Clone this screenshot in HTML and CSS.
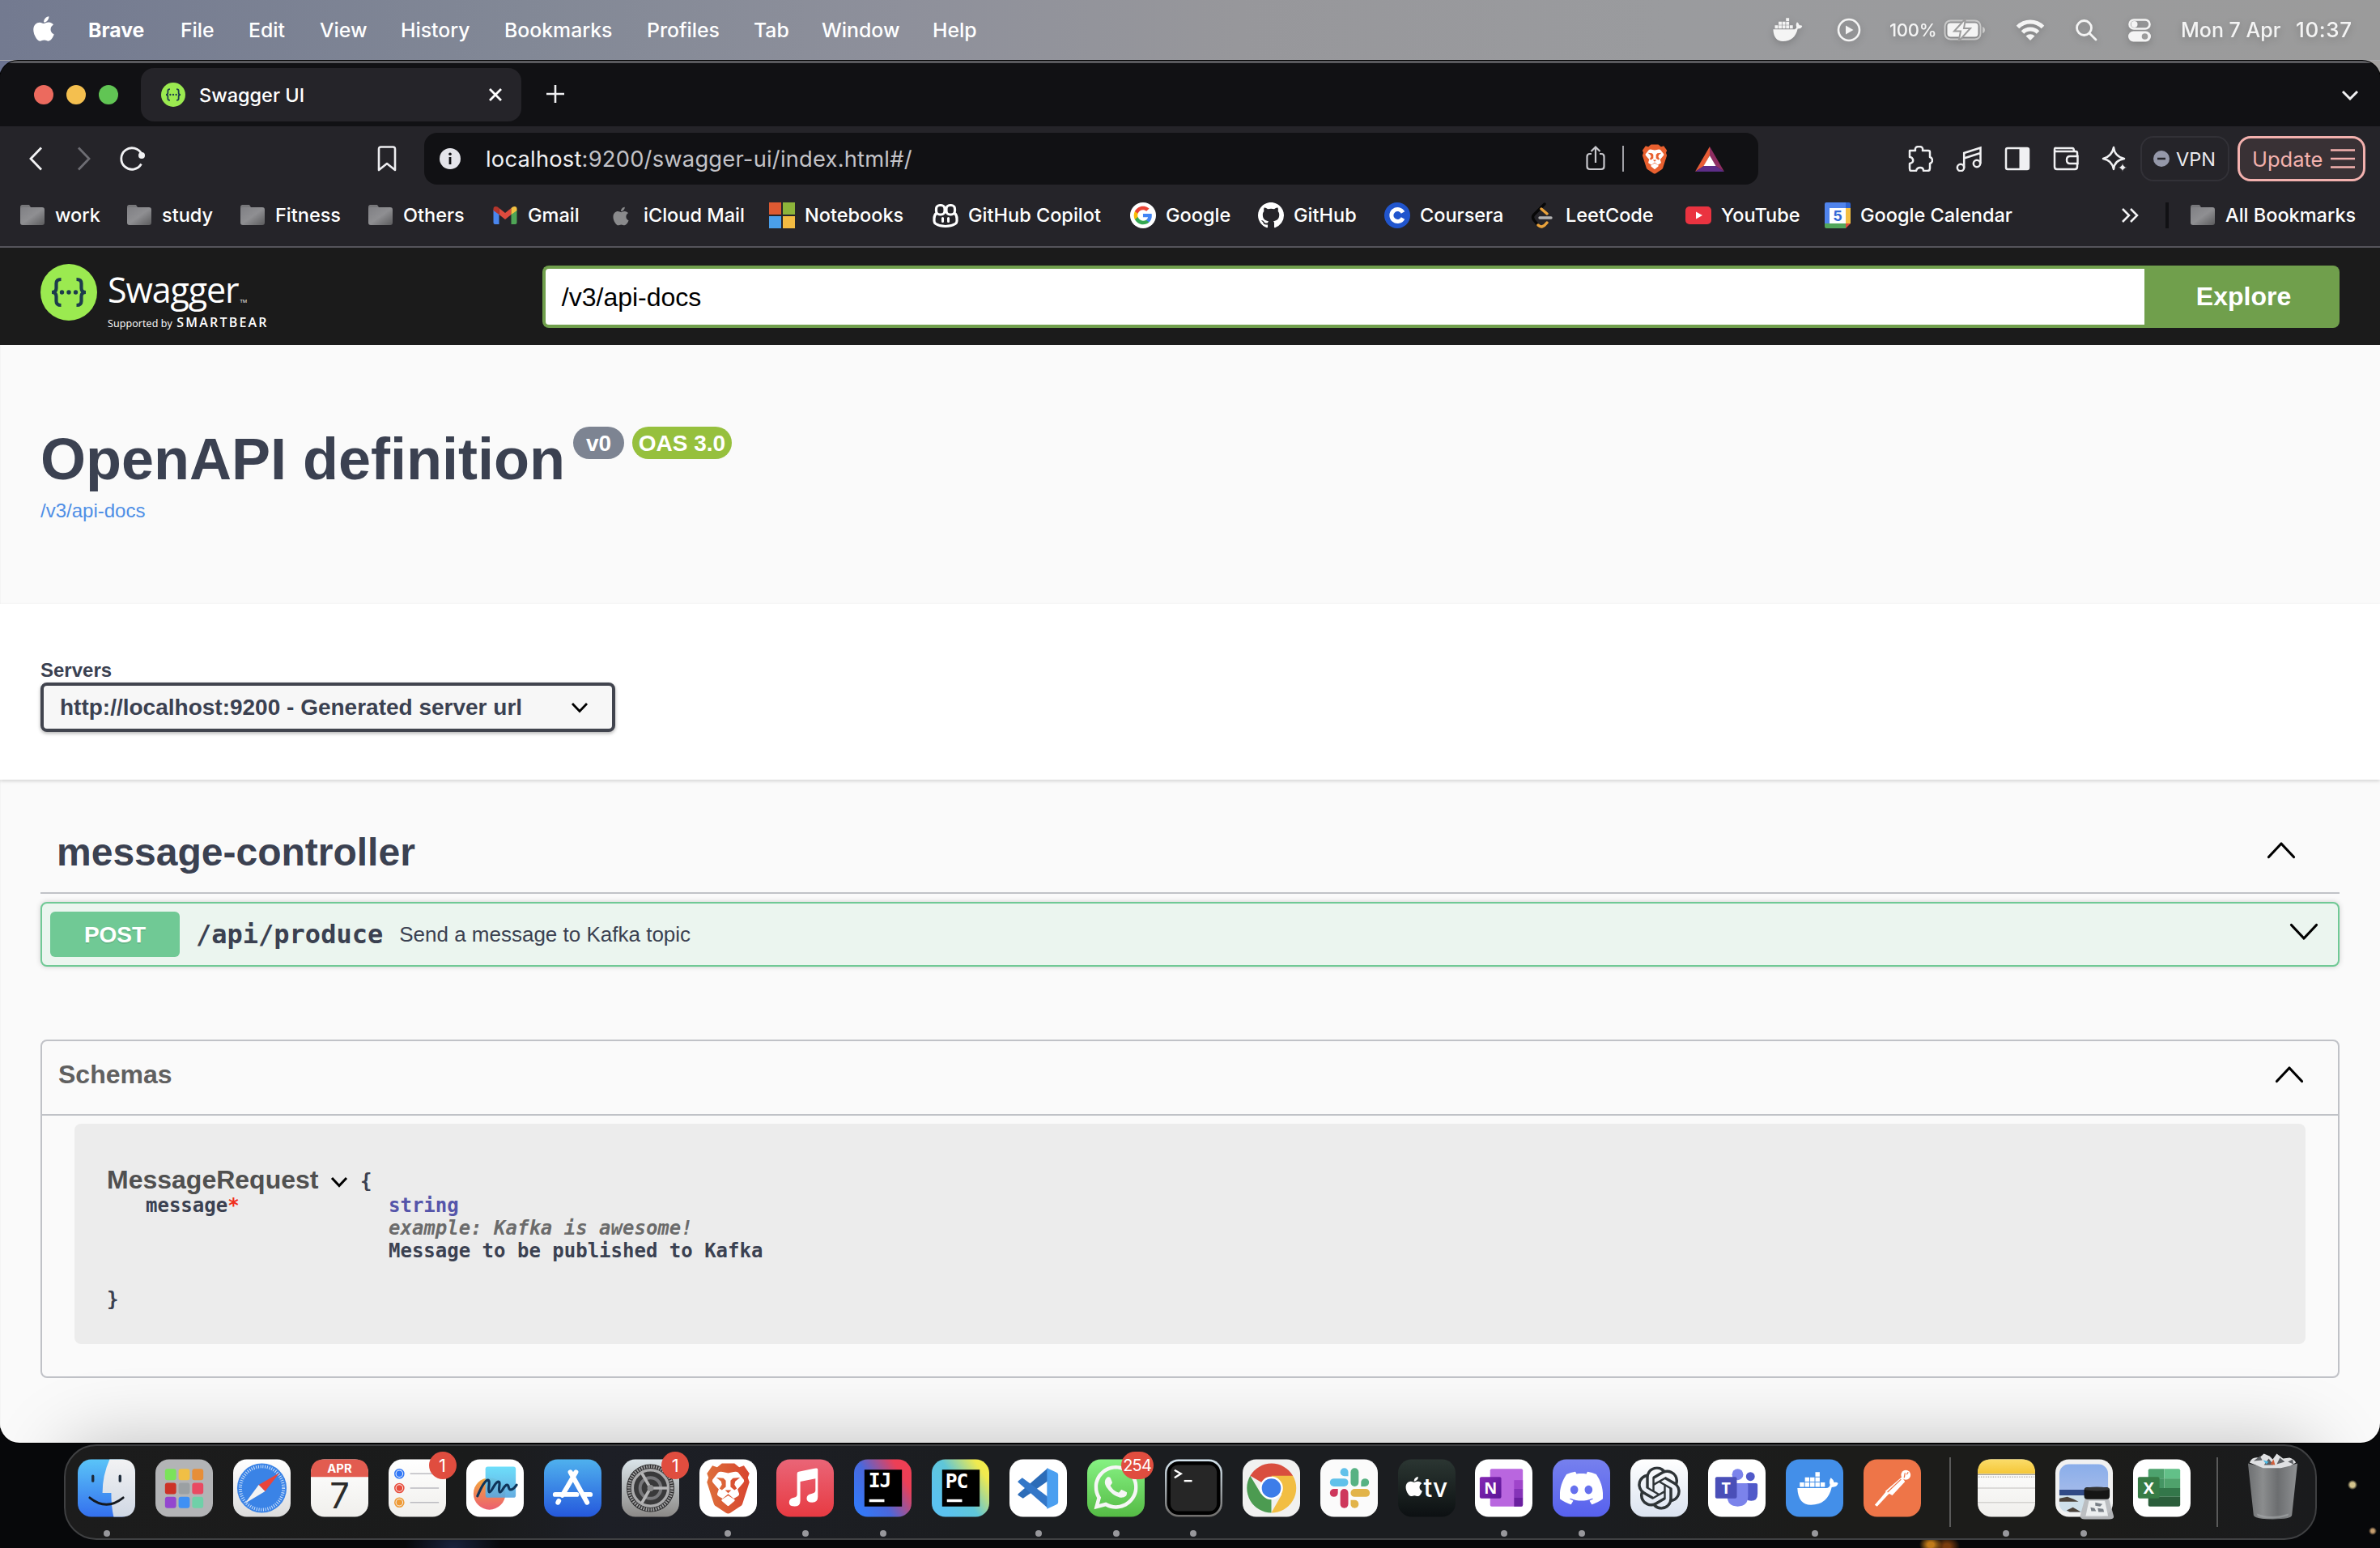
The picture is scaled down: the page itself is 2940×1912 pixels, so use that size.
FILE: index.html
```html
<!DOCTYPE html>
<html lang="en">
<head>
<meta charset="utf-8">
<title>Swagger UI</title>
<link rel="stylesheet" href="styles.css">
</head>
<body>
<svg class="defs" width="0" height="0">
  <defs>
    <linearGradient id="gFolder" x1="0" y1="0" x2="1" y2="1"><stop offset="0" stop-color="#808084"/><stop offset=".5" stop-color="#8f8f92"/><stop offset="1" stop-color="#5b5b5d"/></linearGradient>
    <linearGradient id="gFinder" x1="0" y1="0" x2="0" y2="1"><stop offset="0" stop-color="#5ac4f8"/><stop offset="1" stop-color="#3470ee"/></linearGradient>
    <linearGradient id="gFinderR" x1="0" y1="0" x2="0" y2="1"><stop offset="0" stop-color="#f2f2f3"/><stop offset="1" stop-color="#d0d8e4"/></linearGradient>
    <linearGradient id="gWhite" x1="0" y1="0" x2="0" y2="1"><stop offset="0" stop-color="#ffffff"/><stop offset="1" stop-color="#dcdcdc"/></linearGradient>
    <linearGradient id="gPaper" x1="0" y1="0" x2="0" y2="1"><stop offset="0" stop-color="#ffffff"/><stop offset="1" stop-color="#f0efec"/></linearGradient>
    <linearGradient id="gBlue" x1="0" y1="0" x2="0" y2="1"><stop offset="0" stop-color="#4fb1ee"/><stop offset="1" stop-color="#2558dc"/></linearGradient>
    <linearGradient id="gSet" x1="0" y1="0" x2="0" y2="1"><stop offset="0" stop-color="#dbe5ea"/><stop offset="1" stop-color="#8b8987"/></linearGradient>
    <linearGradient id="gBrave" x1="0" y1="0" x2="1" y2="0"><stop offset="0" stop-color="#dd6f3a"/><stop offset="1" stop-color="#d8452f"/></linearGradient>
    <linearGradient id="gMusic" x1="0" y1="0" x2="0" y2="1"><stop offset="0" stop-color="#ea6577"/><stop offset="1" stop-color="#e73a42"/></linearGradient>
    <linearGradient id="gIJ" x1="0" y1=".7" x2="1" y2=".1"><stop offset="0" stop-color="#3478f6"/><stop offset=".35" stop-color="#4a68dc"/><stop offset=".8" stop-color="#ec3f56"/><stop offset="1" stop-color="#ee3f54"/></linearGradient>
    <linearGradient id="gPC" x1=".1" y1=".7" x2="1" y2=".1"><stop offset="0" stop-color="#5bc2ef"/><stop offset=".4" stop-color="#5fc6d8"/><stop offset=".85" stop-color="#f0ea4f"/><stop offset="1" stop-color="#f4ed4a"/></linearGradient>
    <linearGradient id="gWa" x1="0" y1="0" x2="0" y2="1"><stop offset="0" stop-color="#86f283"/><stop offset="1" stop-color="#55bb45"/></linearGradient>
    <linearGradient id="gTerm" x1="0" y1="0" x2="0" y2="1"><stop offset="0" stop-color="#d4e4ee"/><stop offset="1" stop-color="#6f6d6b"/></linearGradient>
    <linearGradient id="gTv" x1="0" y1="0" x2="0" y2="1"><stop offset="0" stop-color="#2b3632"/><stop offset="1" stop-color="#0c1012"/></linearGradient>
    <linearGradient id="gDisc" x1="0" y1="0" x2="0" y2="1"><stop offset="0" stop-color="#7680ee"/><stop offset="1" stop-color="#5761ee"/></linearGradient>
    <linearGradient id="gAi" x1="0" y1="0" x2="0" y2="1"><stop offset="0" stop-color="#ffffff"/><stop offset="1" stop-color="#dbe3f0"/></linearGradient>
    <linearGradient id="gNote" x1="0" y1="0" x2="0" y2="1"><stop offset="0" stop-color="#fbdc6a"/><stop offset="1" stop-color="#f5c737"/></linearGradient>
    <linearGradient id="gSky" x1="0" y1="0" x2="0" y2="1"><stop offset="0" stop-color="#8aaeea"/><stop offset="1" stop-color="#b4c2ea"/></linearGradient>
    <linearGradient id="gBin" x1="0" y1="0" x2="1" y2="0"><stop offset="0" stop-color="#6e7072"/><stop offset=".3" stop-color="#8b8d8e"/><stop offset=".6" stop-color="#6c6e70"/><stop offset="1" stop-color="#8f9193"/></linearGradient>
    <linearGradient id="gPurp" x1="0" y1="0" x2="1" y2="1"><stop offset="0" stop-color="#8528b4"/><stop offset="1" stop-color="#5a1596"/></linearGradient>
    <linearGradient id="gFree" x1="0" y1="0" x2="0" y2="1"><stop offset="0" stop-color="#f3a93c"/><stop offset="1" stop-color="#ec5f70"/></linearGradient>
    <linearGradient id="gFree2" x1="0" y1="0" x2="0" y2="1"><stop offset="0" stop-color="#62dcfa"/><stop offset="1" stop-color="#5aa6de"/></linearGradient>
    <symbol id="apple" viewBox="0 0 384 512"><path fill="currentColor" d="M318.7 268.7c-.2-36.7 16.4-64.4 50-84.8-18.8-26.9-47.2-41.7-84.7-44.6-35.5-2.8-74.3 20.7-88.5 20.7-15 0-49.4-19.7-76.4-19.7C63.3 141.2 4 184.8 4 273.5q0 39.3 14.4 81.2c12.8 36.7 59 126.7 107.2 125.2 25.2-.6 43-17.9 75.8-17.9 31.8 0 48.3 17.9 76.4 17.9 48.6-.7 90.4-82.5 102.6-119.3-65.2-30.7-61.7-90-61.7-91.9zm-56.6-164.2c27.3-32.4 24.8-61.9 24-72.5-24.1 1.4-52 16.4-67.9 34.9-17.5 19.8-27.8 44.3-25.6 71.9 26.1 2 49.9-11.4 69.5-34.3z"/></symbol>
    <symbol id="folder" viewBox="0 0 32 32"><path fill="#77777a" d="M1 6q0-3 2.500-3h8.500l2 3v4H1z"/><rect x="1" y="6" width="30" height="22" rx="3" fill="url(#gFolder)"/></symbol>
    <symbol id="braces" viewBox="0 0 70 70"><circle cx="35" cy="35" r="35" fill="#9bea50"/><g fill="none" stroke="#1d3c4c" stroke-width="4.200"><path d="M25.500 19q-6 0-6 5v6q0 5-5.500 5 5.500 0 5.500 5v6q0 5 6 5"/><path d="M44.500 19q6 0 6 5v6q0 5 5.500 5-5.500 0-5.500 5v6q0 5-6 5"/></g><g fill="#1d3c4c"><circle cx="26.500" cy="35" r="2.700"/><circle cx="35" cy="35" r="2.700"/><circle cx="43.500" cy="35" r="2.700"/></g></symbol>
    <symbol id="lion" viewBox="8 4 56 66"><path d="M28 5h16l6 5 6-2 7 10-2 5 2 6-9 28q-1 2-3 3l-12 8q-3 2-6 0l-12-8q-2-1-3-3L9 29l2-6-2-5 7-10 6 2z"/><path fill="#fff" d="M29 16l7 1.500 7-1.500q4-1 6 1l7 9q1 2-1 4l-7 8 2 6q0 2-2 3l-5 3-7-6-7 6-5-3q-2-1-2-3l2-6-7-8q-2-2-1-4l7-9q2-2 6-1z"/><path d="M21 23l9 1 3 3v8l-5 4-3-2 3-5-1-4zM51 23l-9 1-3 3v8l5 4 3-2-3-5 1-4zM32 39h8l-4 4z"/><path fill="#fff" d="M36 46l8 5q1 1 0 2l-7 6q-1 1-2 0l-7-6q-1-1 0-2z"/></symbol>
    <symbol id="up" viewBox="0 0 36 22"><path d="M2.500 19.500 18 3l15.500 16.500" fill="none" stroke="#000" stroke-width="3.200" stroke-linecap="round" stroke-linejoin="round"/></symbol>
    <symbol id="whale" viewBox="0 0 54 48"><path fill="currentColor" d="M2 23h36q4 0 5-4-2-5 1-9 3 2 4 6 3-1 5 1-1 5-8 5-5 22-26 22Q3 44 2 23zM5 16h5.500v5.500H5zm6.500 0H17v5.500h-5.500zm6.500 0h5.500v5.500H18zm6.500 0H30v5.500h-5.500zm6.500 0h5.500v5.500H31zM11.500 9.500H17V15h-5.500zm6.500 0h5.500V15H18zm6.500 0H30V15h-5.500zm0-6.500H30v5.500h-5.500z"/></symbol>
    <symbol id="note" viewBox="0 0 40 48"><path fill="currentColor" d="M12 7q0-2 2-2.500L36 0q2 0 2 2v34q0 7-7 7t-7-5 6-6q5-1 5-4V13l-19 4v24q0 7-7 7t-7-5 6-6q4-1 4-4z"/></symbol>
  </defs>
</svg>

<nav class="menubar">
  <svg class="m-apple"><use href="#apple"/></svg>
  <div class="m-items"><b>Brave</b><span>File</span><span>Edit</span><span>View</span><span>History</span><span>Bookmarks</span><span>Profiles</span><span>Tab</span><span>Window</span><span>Help</span></div>
  <div class="m-status">
    <svg width="38" height="34" viewBox="0 0 54 48"><use href="#whale"/></svg>
    <svg width="30" height="30" viewBox="0 0 30 30"><circle cx="15" cy="15" r="13" fill="none" stroke="#f4f4f4" stroke-width="2.600"/><path d="M11 9.500 20.500 15 11 20.500z" fill="#f4f4f4"/></svg>
    <span class="m-pct">100%</span>
    <svg width="52" height="28" viewBox="0 0 52 28"><rect x="1.500" y="2.500" width="44" height="23" rx="7" fill="none" stroke="#c9c9c9" stroke-width="2"/><rect x="4.500" y="5.500" width="38" height="17" rx="4" fill="#f4f4f4"/><path d="M48 10q3 1 3 4t-3 4z" fill="#c9c9c9"/><path d="M27 0 13 15.500h8L18.500 28 33 12h-8z" fill="#f4f4f4" stroke="#9c9c9c" stroke-width="2"/></svg>
    <svg width="36" height="28" viewBox="0 0 36 28"><g fill="none" stroke="#f4f4f4" stroke-width="5"><path d="M2.500 10.500a22 22 0 0 1 31 0"/><path d="M8.500 17a13.500 13.500 0 0 1 19 0"/></g><path d="M18 27l-5.500-5.500a8 8 0 0 1 11 0z" fill="#f4f4f4"/></svg>
    <svg width="28" height="28" viewBox="0 0 28 28"><g fill="none" stroke="#f4f4f4" stroke-width="2.800" stroke-linecap="round"><circle cx="11.500" cy="11.500" r="9"/><path d="M18 18l8 8"/></g></svg>
    <svg width="28" height="30" viewBox="0 0 28 30"><rect x="1.500" y="2.500" width="25" height="11" rx="5.500" fill="none" stroke="#f4f4f4" stroke-width="2.600"/><circle cx="7.500" cy="8" r="4" fill="#f4f4f4"/><rect x="0" y="16.500" width="28" height="13" rx="6.500" fill="#f4f4f4"/><circle cx="20.500" cy="23" r="3.800" fill="#9c9c9c"/></svg>
    <span class="m-date">Mon 7 Apr</span><span class="m-time">10:37</span>
  </div>
</nav>

<main class="window">
  <header class="tabs">
    <i class="light red"></i><i class="light yellow"></i><i class="light green"></i>
    <div class="tab"><svg class="fav"><use href="#braces"/></svg><span>Swagger UI</span><svg class="close" viewBox="0 0 18 18"><path d="M2 2l14 14M16 2 2 16" stroke="#fff" stroke-width="2.800"/></svg></div>
    <svg class="plus" viewBox="0 0 22 22"><path d="M11 0v22M0 11h22" stroke="#f0f0f2" stroke-width="2.600"/></svg>
    <svg class="tabmenu" viewBox="0 0 22 13"><path d="M2 2l9 9 9-9" fill="none" stroke="#f0f0f2" stroke-width="3"/></svg>
  </header>

  <div class="toolbar">
    <svg class="back" viewBox="0 0 16 30"><path d="M15 1.500 2 15l13 13.500" fill="none" stroke="#f2f2f4" stroke-width="2.800"/></svg>
    <svg class="fwd" viewBox="0 0 16 30"><path d="M1 1.500 14 15 1 28.500" fill="none" stroke="#6d6d73" stroke-width="2.800"/></svg>
    <svg class="reload" viewBox="0 0 32 32"><path d="M26.500 22.500A13.200 13.200 0 1 1 27 10.500" fill="none" stroke="#f2f2f4" stroke-width="2.800"/><circle cx="27" cy="12" r="4" fill="#f2f2f4"/></svg>
    <svg class="bm" viewBox="0 0 24 32"><path d="M2 4q0-2.500 2.500-2.500h15Q22 1.500 22 4v26l-10-8-10 8z" fill="none" stroke="#ededf0" stroke-width="2.600" stroke-linejoin="round"/></svg>
    <div class="omnibox">
      <svg class="info" viewBox="0 0 26 26"><circle cx="13" cy="13" r="13" fill="#e4e4ea"/><path d="M13 11v9" stroke="#111114" stroke-width="2.800"/><circle cx="13" cy="7.300" r="1.800" fill="#111114"/></svg>
      <span class="url"><em>localhost</em>:9200/swagger-ui/index.html#/</span>
      <svg class="share" viewBox="0 0 26 32"><path d="M8 11H6q-3.500 0-3.500 3.500v12Q2.500 30 6 30h14q3.500 0 3.500-3.500v-12Q23.500 11 20 11h-2M13 22V3M7.500 8 13 2.500 18.500 8" fill="none" stroke="#c8c8cd" stroke-width="2.200"/></svg>
      <i class="osep"></i>
      <svg class="obrave" fill="#e9602f" viewBox="8 4 56 66"><use href="#lion" x="8" y="4" width="56" height="66"/></svg>
      <svg class="bat" viewBox="0 0 36 31"><path fill="#e85d36" d="M18 0 0 31l11-7 7-13z"/><path fill="#8e2e62" d="M18 0l18 31-11-7-7-13z"/><path fill="#5d2d88" d="M0 31h36l-10.500-7h-15z"/><path fill="#fff" d="M18 11l7.500 13h-15z"/></svg>
    </div>
    <div class="exts">
      <svg viewBox="0 0 32 32"><path d="M3 6h7q-1-5 4.500-5T19 6h7q2 0 2 2v6q3 1 3 4t-3 4v6q0 3-3 3h-5q0-4-4-4t-5 4H5q-2 0-2-3v-6q5-1 4-5-1-3-4-3z" fill="none" stroke="#f0f0f2" stroke-width="2.500" stroke-linejoin="round"/></svg>
      <svg viewBox="0 0 32 32"><g fill="none" stroke="#f0f0f2" stroke-width="2.500"><circle cx="6" cy="27" r="4.200"/><circle cx="26" cy="22" r="4.200"/><path d="M10.200 27V9L30.500 2.500V22M10.200 15.500 30.500 9"/></g></svg>
      <svg viewBox="0 0 32 32"><rect x="2" y="3" width="28" height="26" rx="2" fill="none" stroke="#f0f0f2" stroke-width="2.500"/><path d="M18.500 3H30v26H18.500z" fill="#f0f0f2"/></svg>
      <svg viewBox="0 0 32 32"><g fill="none" stroke="#f0f0f2" stroke-width="2.500"><path d="M30 13V9q0-2-2-2H4q-2 0-2-2.500T4 3h20q2 0 2 4M2 5v21q0 3 3 3h22q3 0 3-3v-4"/><path d="M30.500 13H21q-4 0-4 4.500t4 4.500h9.500z"/></g></svg>
      <svg viewBox="0 0 32 32"><path d="M15 2q1 11 13 14-12 2-13 13Q13 18 2 16 13 13 15 2z" fill="none" stroke="#f0f0f2" stroke-width="2.500" stroke-linejoin="round"/><path d="M26 21q.5 5 5.500 6-5 .8-5.500 5.500-.5-4.700-5.500-5.500 5-1 5.500-6z" fill="#f0f0f2" stroke="#252429" stroke-width=".6"/></svg>
    </div>
    <div class="vpn"><svg viewBox="0 0 20 20"><circle cx="10" cy="10" r="10" fill="#9598a9"/><path d="M5 10h10" stroke="#252429" stroke-width="2.600"/></svg><span>VPN</span></div>
    <div class="update"><span>Update</span><svg viewBox="0 0 30 26"><path d="M0 2.500h30M0 13h30M0 23.500h30" stroke="#f3b1ae" stroke-width="2.600"/></svg></div>
  </div>

  <div class="bookmarks">
    <a><svg><use href="#folder"/></svg>work</a>
    <a><svg><use href="#folder"/></svg>study</a>
    <a><svg><use href="#folder"/></svg>Fitness</a>
    <a><svg><use href="#folder"/></svg>Others</a>
    <a><svg viewBox="0 0 32 32"><path fill="#4a86ee" d="M1.500 9v16q0 2 2 2h5V14z"/><path fill="#4fa556" d="M30.500 9v16q0 2-2 2h-5V14z"/><path fill="#dd4b3e" d="M8.500 7 16 13l7.500-6v8L16 21l-7.500-6z"/><path fill="#b5352b" d="M1.500 8q0-3 3-3 2 0 4 2v8l-7-5z"/><path fill="#f4c142" d="M30.500 8q0-3-3-3-2 0-4 2v8l7-5z"/></svg>Gmail</a>
    <a class="grey"><svg><use href="#apple" y="4" height="26"/></svg><span>iCloud Mail</span></a>
    <a><svg viewBox="0 0 32 32"><path fill="#dd5a32" d="M0 0h15v15H0z"/><path fill="#8db43a" d="M17 0h15v15H17z"/><path fill="#4a9fea" d="M0 17h15v15H0z"/><path fill="#f3bb42" d="M17 17h15v15H17z"/></svg>Notebooks</a>
    <a><svg viewBox="0 0 32 32"><g fill="none" stroke="#fff" stroke-width="3.200"><rect x="4.500" y="3.500" width="10.500" height="11.500" rx="4.500"/><rect x="17" y="3.500" width="10.500" height="11.500" rx="4.500"/><path d="M4.500 13.500q-2.500 2.500-2.500 6.500v3q0 2 2 3.500 5 3 12 3t12-3q2-1.500 2-3.500v-3q0-4-2.500-6.500"/></g><path d="M12.500 19.500v4M19.500 19.500v4" stroke="#fff" stroke-width="3" stroke-linecap="round"/></svg>GitHub Copilot</a>
    <a><svg viewBox="0 0 32 32"><circle cx="16" cy="16" r="16" fill="#fff"/><g transform="translate(3.600 3.600) scale(1.030)"><path fill="#4285F4" d="M22.560 12.250c0-.78-.07-1.530-.2-2.250H12v4.260h5.920c-.26 1.370-1.040 2.530-2.210 3.310v2.770h3.570c2.080-1.920 3.280-4.740 3.280-8.090z"/><path fill="#34A853" d="M12 23c2.970 0 5.460-.98 7.280-2.660l-3.570-2.770c-.98.66-2.230 1.060-3.710 1.060-2.860 0-5.290-1.930-6.160-4.530H2.180v2.840C3.990 20.530 7.700 23 12 23z"/><path fill="#FBBC05" d="M5.840 14.090c-.22-.66-.35-1.360-.35-2.090s.13-1.430.35-2.090V7.070H2.180C1.430 8.550 1 10.220 1 12s.43 3.450 1.180 4.930l2.850-2.220.81-.62z"/><path fill="#EA4335" d="M12 5.380c1.620 0 3.060.56 4.210 1.640l3.150-3.150C17.450 2.090 14.970 1 12 1 7.700 1 3.990 3.470 2.180 7.070l3.660 2.840c.87-2.600 3.300-4.530 6.160-4.530z"/></g></svg>Google</a>
    <a><svg viewBox="0 0 16 16"><path fill="#fff" d="M8 0C3.580 0 0 3.580 0 8c0 3.540 2.290 6.530 5.470 7.590.4.070.55-.17.55-.38 0-.19-.01-.82-.01-1.490-2.010.37-2.530-.49-2.690-.94-.09-.23-.48-.94-.82-1.130-.28-.15-.68-.52-.01-.53.63-.01 1.080.58 1.230.82.72 1.210 1.870.87 2.330.66.07-.52.28-.87.51-1.070-1.780-.2-3.640-.89-3.640-3.950 0-.87.31-1.590.82-2.150-.08-.2-.36-1.020.08-2.120 0 0 .67-.21 2.200.82.64-.18 1.320-.27 2-.27.68 0 1.360.09 2 .27 1.530-1.040 2.200-.82 2.200-.82.44 1.100.16 1.920.08 2.120.51.56.82 1.270.82 2.150 0 3.070-1.870 3.750-3.650 3.950.29.25.54.73.54 1.480 0 1.070-.01 1.930-.01 2.200 0 .21.15.46.55.38A8.013 8.013 0 0016 8c0-4.420-3.580-8-8-8z"/></svg>GitHub</a>
    <a><svg viewBox="0 0 32 32"><circle cx="16" cy="16" r="16" fill="#2155cd"/><path d="M23 12.500A7.500 7.500 0 1 0 23 19.500" fill="none" stroke="#fff" stroke-width="5"/></svg>Coursera</a>
    <a><svg viewBox="0 0 32 32"><g fill="none" stroke-width="3.400" stroke-linecap="round"><path stroke="#070707" d="M18 2 5 15q-3 3 0 7l4 5"/><path stroke="#e9a23b" d="M14 8l7 6M10 28q5 5 11-3"/><path stroke="#b3b3b3" d="M12 19h14"/></g></svg>LeetCode</a>
    <a><svg viewBox="0 0 32 32"><rect y="5" width="32" height="22" rx="5" fill="#ea3340"/><path fill="#fff" d="M13 11.500 21 16l-8 4.500z"/></svg>YouTube</a>
    <a><svg viewBox="0 0 32 32"><path fill="#5084ed" d="M0 2q0-2 2-2h24v7H7v19H0z"/><path fill="#2f63cf" d="M26 0h4q2 0 2 2v5h-6z"/><path fill="#f3bf42" d="M26 7h6v19h-6z"/><path fill="#53a65a" d="M0 26h26v6H2q-2 0-2-2z"/><path fill="#dc4c3e" d="M26 26h6l-6 6z"/><path fill="#fff" d="M6 7h20v19H6z"/><text x="16" y="23" text-anchor="middle" class="cal5">5</text></svg>Google Calendar</a>
    <svg class="more" viewBox="0 0 22 18"><path d="M2 1l8 8-8 8M12 1l8 8-8 8" fill="none" stroke="#f4f4f6" stroke-width="2.500"/></svg>
    <i class="bsep"></i>
    <a><svg><use href="#folder"/></svg>All Bookmarks</a>
  </div>

  <section class="page">
    <div class="topbar">
      <svg class="logo"><use href="#braces"/></svg>
      <div class="brand"><div class="word">Swagger<sub>TM</sub></div><div class="by">Supported by <b>SMARTBEAR</b></div></div>
      <div class="field">/v3/api-docs</div>
      <div class="explore">Explore</div>
    </div>
    <div class="infobox">
      <div class="titlerow"><h1>OpenAPI definition</h1><span class="pill grey-pill">v0</span><span class="pill green-pill">OAS 3.0</span></div>
      <a class="doclink">/v3/api-docs</a>
    </div>
    <div class="schemes">
      <label>Servers</label>
      <div class="select"><span>http://localhost:9200 - Generated server url</span><svg viewBox="0 0 22 14"><path d="M2 2l9 9.500L20 2" fill="none" stroke="#000" stroke-width="2.800"/></svg></div>
    </div>
    <div class="body">
      <div class="tag"><h3>message-controller</h3><svg class="chev"><use href="#up"/></svg></div>
      <div class="op"><span class="method">POST</span><span class="path">/api/produce</span><span class="desc">Send a message to Kafka topic</span><svg class="chev down"><use href="#up"/></svg></div>
      <div class="models">
        <div class="mhead"><h4>Schemas</h4><svg class="chev"><use href="#up"/></svg></div>
        <div class="model">
          <div class="mname"><b>MessageRequest</b><svg viewBox="0 0 22 14"><path d="M2 2l9 9.500L20 2" fill="none" stroke="#000" stroke-width="3"/></svg><span>{</span></div>
          <div class="props"><div>message<i>*</i></div><div><p class="type">string</p><p class="ex">example: Kafka is awesome!</p><p>Message to be published to Kafka</p></div></div>
          <div class="end">}</div>
        </div>
      </div>
    </div>
  </section>
</main>

<footer class="dock">
  <div class="app on"><svg viewBox="0 0 72 72"><rect width="72" height="72" rx="17" fill="url(#gFinder)"/><path d="M40 0h15q17 0 17 17v38q0 17-17 17H45q-3-13-3-30H31Q31 20 40 0z" fill="url(#gFinderR)"/><path d="M19 21v6M53 21v6" stroke="#1d2b3a" stroke-width="3.400" stroke-linecap="round"/><path d="M15 48q21 17 42 0" fill="none" stroke="#14181e" stroke-width="2.800" stroke-linecap="round"/></svg></div>
  <div class="app"><svg viewBox="0 0 72 72"><rect width="72" height="72" rx="17" fill="#b3b4b6"/><g><rect x="12" y="12" width="14" height="14" rx="3" fill="#7be35a"/><rect x="29" y="12" width="14" height="14" rx="3" fill="#f0bf45"/><rect x="46" y="12" width="14" height="14" rx="3" fill="#e78e38"/><rect x="12" y="29.500" width="14" height="14" rx="3" fill="#cc3227"/><rect x="29" y="29.500" width="14" height="14" rx="3" fill="#9ba0a3"/><rect x="46" y="29.500" width="14" height="14" rx="3" fill="#e94a62"/><rect x="12" y="47" width="14" height="14" rx="3" fill="#9346cf"/><rect x="29" y="47" width="14" height="14" rx="3" fill="#3f90f4"/><rect x="46" y="47" width="14" height="14" rx="3" fill="#6fd0a8"/></g></svg></div>
  <div class="app"><svg viewBox="0 0 72 72"><rect width="72" height="72" rx="17" fill="url(#gWhite)"/><circle cx="36" cy="36" r="31" fill="#3a83e6"/><circle cx="36" cy="36" r="27" fill="none" stroke="#cfe3fb" stroke-width="4" stroke-dasharray="1 1.830"/><path d="M58 17 32 32l8 8z" fill="#e9453b"/><path d="M15 55 32 32l8 8z" fill="#f3f3f3"/></svg></div>
  <div class="app"><svg viewBox="0 0 72 72"><rect width="72" height="72" rx="17" fill="url(#gPaper)"/><path d="M0 22v-5Q0 0 17 0h38q17 0 17 17v5z" fill="#e25c50"/><text x="36" y="17" text-anchor="middle" class="apr">APR</text><text x="36" y="61" text-anchor="middle" class="seven">7</text></svg></div>
  <div class="app"><svg viewBox="0 0 72 72"><rect width="72" height="72" rx="17" fill="url(#gPaper)"/><g fill="none" stroke-width="1.600"><circle cx="13.500" cy="18" r="5.600" stroke="#3278f6"/><circle cx="13.500" cy="36" r="5.600" stroke="#e84d3d"/><circle cx="13.500" cy="54" r="5.600" stroke="#ee9a35"/></g><circle cx="13.500" cy="18" r="3.800" fill="#3278f6"/><circle cx="13.500" cy="36" r="3.800" fill="#e84d3d"/><circle cx="13.500" cy="54" r="3.800" fill="#ee9a35"/><path d="M27 18h36M27 36h36M27 54h36" stroke="#bcbcc1" stroke-width="1.600"/></svg><span class="badge">1</span></div>
  <div class="app"><svg viewBox="0 0 72 72"><rect width="72" height="72" rx="17" fill="#fff"/><circle cx="29" cy="43" r="20" fill="url(#gFree)"/><rect x="24" y="9" width="38" height="39" rx="3" fill="url(#gFree2)" opacity=".93"/><path d="M14 46C20 32 24 26 27 26c4 0-1 14 2 15 3 0 7-13 11-13 4 0-1 11 2 13 3 1 5-9 9-9 3 0 1 5 4 6 3 0 6-3 8-6" fill="none" stroke="#10355a" stroke-width="3.200" stroke-linecap="round" stroke-linejoin="round"/></svg></div>
  <div class="app"><svg viewBox="0 0 72 72"><rect width="72" height="72" rx="17" fill="url(#gBlue)"/><g stroke="#fff" stroke-width="6" stroke-linecap="round"><path d="M40 16 23 45M17.500 54l1-2M33 16l21 38M14 44h27M51 44h7"/></g></svg></div>
  <div class="app"><svg viewBox="0 0 72 72"><rect width="72" height="72" rx="17" fill="url(#gSet)"/><circle cx="36" cy="36" r="30" fill="#2c2c2d"/><circle cx="36" cy="36" r="27" fill="none" stroke="#a3a3a4" stroke-width="4" stroke-dasharray="1.700 1.400"/><circle cx="36" cy="36" r="22.500" fill="#39393a" stroke="#aaaaab" stroke-width="3.500"/><circle cx="36" cy="36" r="13" fill="none" stroke="#77777a" stroke-width="4"/><path d="M36 36h22M36 36 25 17M36 36 25 55" stroke="#b5b5b6" stroke-width="3.600"/><circle cx="36" cy="36" r="4" fill="#8b8b8c"/></svg><span class="badge">1</span></div>
  <div class="app on"><svg viewBox="0 0 72 72"><rect width="72" height="72" rx="17" fill="#fff"/><svg x="8" y="4" width="56" height="65" fill="url(#gBrave)"><use href="#lion"/></svg></svg></div>
  <div class="app on"><svg viewBox="0 0 72 72"><rect width="72" height="72" rx="17" fill="url(#gMusic)"/><svg x="14" y="11" width="40" height="48" color="#fff"><use href="#note"/></svg></svg></div>
  <div class="app on"><svg viewBox="0 0 72 72"><rect width="72" height="72" rx="17" fill="url(#gIJ)"/><path d="M13 13h47v46H13z"/><path d="M19 50h19v3.500H19z" fill="#fff"/><text x="18" y="35" class="jb">IJ</text></svg></div>
  <div class="app"><svg viewBox="0 0 72 72"><rect width="72" height="72" rx="17" fill="url(#gPC)"/><path d="M13 13h47v46H13z"/><path d="M19 50h19v3.500H19z" fill="#fff"/><text x="17" y="36" class="jb">PC</text></svg></div>
  <div class="app on"><svg viewBox="0 0 72 72"><rect width="72" height="72" rx="17" fill="#fff"/><path fill="#2c6cb8" d="M48 11v16L17 49l-6-4q-1-1 0-2z"/><path fill="#3377c8" d="M11 29q-1-1 0-2l5-4 32 24v14z"/><path fill="#4b9ff0" d="M47 11l11 5q3 1 3 3v35q0 2-3 3l-11 5z"/></svg></div>
  <div class="app on"><svg viewBox="0 0 72 72"><rect width="72" height="72" rx="17" fill="url(#gWa)"/><svg x="8.500" y="3" width="55" height="64" viewBox="0 0 448 512"><path fill="#f6f6f6" d="M380.900 97.100C339 55.100 283.200 32 223.900 32c-122.400 0-222 99.600-222 222 0 39.100 10.200 77.300 29.600 111L0 480l117.700-30.900c32.400 17.700 68.900 27 106.100 27h.1c122.300 0 224.100-99.600 224.100-222 0-59.300-25.200-115-67.100-157zm-157 341.600c-33.200 0-65.700-8.900-94-25.700l-6.700-4-69.800 18.300L72 359.200l-4.400-7c-18.500-29.400-28.200-63.300-28.200-98.200 0-101.700 82.800-184.500 184.600-184.500 49.300 0 95.600 19.200 130.400 54.100 34.800 34.900 56.200 81.200 56.100 130.500 0 101.800-84.900 184.600-186.600 184.600zm101.200-138.200c-5.500-2.800-32.800-16.200-37.900-18-5.100-1.900-8.800-2.800-12.500 2.800-3.700 5.600-14.300 18-17.600 21.800-3.200 3.700-6.500 4.200-12 1.400-32.600-16.300-54-29.100-75.500-66-5.700-9.800 5.700-9.100 16.300-30.300 1.800-3.700.9-6.900-.5-9.700-1.400-2.800-12.500-30.100-17.100-41.200-4.500-10.800-9.100-9.300-12.500-9.500-3.200-.2-6.900-.2-10.600-.2-3.700 0-9.700 1.400-14.800 6.900-5.100 5.600-19.400 19-19.400 46.300 0 27.300 19.900 53.700 22.600 57.400 2.800 3.700 39.100 59.700 94.800 83.800 35.200 15.200 49 16.500 66.600 13.900 10.700-1.600 32.800-13.400 37.400-26.400 4.600-13 4.600-24.100 3.200-26.400-1.300-2.500-5-3.900-10.500-6.600z"/></svg></svg><span class="badge wide">254</span></div>
  <div class="app on"><svg viewBox="0 0 72 72"><rect width="72" height="72" rx="17" fill="url(#gTerm)"/><rect x="2.500" y="2.500" width="67" height="67" rx="15" fill="#000"/><rect x="7" y="7" width="58" height="58" rx="9" fill="#262626"/><path d="M12 13.500 20 18l-8 5" fill="none" stroke="#fff" stroke-width="2.400"/><path d="M24 27h10" stroke="#fff" stroke-width="2.400"/></svg></div>
  <div class="app"><svg viewBox="0 0 72 72"><rect width="72" height="72" rx="17" fill="#f1f1f0"/><path fill="#d94e3e" d="M36 36 9.500 20.500A31 31 0 0 1 63 20.500z"/><path fill="#4c9b51" d="M36 36 36 67A31 31 0 0 1 9.500 20.500L23 43z"/><path fill="#f2be42" d="M36 20.500h27A31 31 0 0 1 36 67l13-23z"/><circle cx="36" cy="36" r="14.500" fill="#fff"/><circle cx="36" cy="36" r="12" fill="#3d7de9"/></svg></div>
  <div class="app"><svg viewBox="0 0 72 72"><rect width="72" height="72" rx="17" fill="#fbfbfb"/><g fill="#61c1ea"><path d="M30 11a5 5 0 0 1 5 5v5h-5a5 5 0 0 1 0-10z"/><rect x="12" y="24" width="23" height="10" rx="5"/></g><g fill="#57b283"><rect x="38" y="11" width="10" height="23" rx="5"/><path d="M61 29a5 5 0 0 1-5 5h-5v-5a5 5 0 0 1 10 0z"/></g><g fill="#ce375c"><rect x="25" y="37" width="10" height="24" rx="5"/><path d="M12 42a5 5 0 0 1 5-5h5v5a5 5 0 0 1-10 0z"/></g><g fill="#e2b44a"><rect x="38" y="37" width="24" height="10" rx="5"/><path d="M43 61a5 5 0 0 1-5-5v-5h5a5 5 0 0 1 0 10z"/></g></svg></div>
  <div class="app"><svg viewBox="0 0 72 72"><rect width="72" height="72" rx="17" fill="url(#gTv)"/><svg x="9" y="20" width="22" height="28" color="#fff"><use href="#apple"/></svg><text x="32" y="47" class="tv">tv</text></svg></div>
  <div class="app on"><svg viewBox="0 0 72 72"><rect width="72" height="72" rx="17" fill="#fff"/><rect x="19" y="12" width="41" height="47" rx="2" fill="#b966df"/><path fill="#9f45ca" d="M49 26h11v11H49z"/><path fill="#8533b8" d="M49 37h11v11H49z"/><path fill="#6a1f9f" d="M49 48h11v9q0 2-2 2h-9z"/><rect x="6" y="22" width="27" height="27" rx="2" fill="url(#gPurp)"/><text x="19.500" y="43" text-anchor="middle" class="ms">N</text></svg></div>
  <div class="app on"><svg viewBox="0 0 72 72"><rect width="72" height="72" rx="17" fill="url(#gDisc)"/><svg x="9" y="9" width="54" height="54" viewBox="0 0 24 24"><path fill="#fff" d="M20.317 4.370a19.800 19.800 0 00-4.885-1.515.074.074 0 00-.079.037c-.211.375-.445.865-.608 1.250-1.845-.276-3.680-.276-5.487 0-.164-.393-.406-.874-.618-1.250a.077.077 0 00-.078-.037 19.740 19.740 0 00-4.885 1.515.07.07 0 00-.032.028C.533 9.046-.319 13.580.099 18.058a.082.082 0 00.031.056c2.053 1.508 4.041 2.423 5.993 3.030a.078.078 0 00.084-.028c.462-.630.873-1.295 1.226-1.994a.076.076 0 00-.042-.106c-.653-.248-1.274-.550-1.872-.892a.077.077 0 01-.008-.128c.126-.094.252-.192.372-.291a.074.074 0 01.078-.011c3.928 1.793 8.180 1.793 12.061 0a.074.074 0 01.079.010c.120.099.246.198.373.292a.077.077 0 01-.007.128 12.300 12.300 0 01-1.873.891.077.077 0 00-.041.107c.360.698.772 1.363 1.225 1.993a.076.076 0 00.084.029c1.961-.607 3.950-1.522 6.002-3.029a.077.077 0 00.031-.055c.5-5.177-.838-9.674-3.549-13.660a.061.061 0 00-.031-.029zM8.020 15.331c-1.183 0-2.157-1.086-2.157-2.419s.956-2.419 2.157-2.419c1.211 0 2.176 1.095 2.157 2.419 0 1.333-.956 2.419-2.157 2.419zm7.975 0c-1.183 0-2.157-1.086-2.157-2.419s.955-2.419 2.157-2.419c1.211 0 2.176 1.095 2.157 2.419 0 1.333-.946 2.419-2.157 2.419z"/></svg></svg></div>
  <div class="app"><svg viewBox="0 0 72 72"><rect width="72" height="72" rx="17" fill="url(#gAi)"/><svg x="9" y="9" width="54" height="54" viewBox="0 0 24 24"><path fill="#2e3437" d="M22.2819 9.8211a5.9847 5.9847 0 0 0-.5157-4.9108 6.0462 6.0462 0 0 0-6.5098-2.9A6.0651 6.0651 0 0 0 4.9807 4.1818a5.9847 5.9847 0 0 0-3.9977 2.9 6.0462 6.0462 0 0 0 .7427 7.0966 5.98 5.98 0 0 0 .511 4.9107 6.051 6.051 0 0 0 6.5146 2.9001A5.9847 5.9847 0 0 0 13.2599 24a6.0557 6.0557 0 0 0 5.7718-4.2058 5.9894 5.9894 0 0 0 3.9977-2.9001 6.0557 6.0557 0 0 0-.7475-7.0729zm-9.022 12.6081a4.4755 4.4755 0 0 1-2.8764-1.0408l.1419-.0804 4.7783-2.7582a.7948.7948 0 0 0 .3927-.6813v-6.7369l2.02 1.1686a.071.071 0 0 1 .038.052v5.5826a4.504 4.504 0 0 1-4.4945 4.4944zm-9.6607-4.1254a4.4708 4.4708 0 0 1-.5346-3.0137l.142.0852 4.783 2.7582a.7712.7712 0 0 0 .7806 0l5.8428-3.3685v2.3324a.0804.0804 0 0 1-.0332.0615L9.74 19.9502a4.4992 4.4992 0 0 1-6.1408-1.6464zM2.3408 7.8956a4.485 4.485 0 0 1 2.3655-1.9728V11.6a.7664.7664 0 0 0 .3879.6765l5.8144 3.3543-2.0201 1.1685a.0757.0757 0 0 1-.071 0l-4.8303-2.7865A4.504 4.504 0 0 1 2.3408 7.872zm16.5963 3.8558L13.1038 8.364 15.1192 7.2a.0757.0757 0 0 1 .071 0l4.8303 2.7913a4.4944 4.4944 0 0 1-.6765 8.1042v-5.6772a.79.79 0 0 0-.407-.667zm2.0107-3.0231l-.142-.0852-4.7735-2.7818a.7759.7759 0 0 0-.7854 0L9.409 9.2297V6.8974a.0662.0662 0 0 1 .0284-.0615l4.8303-2.7866a4.4992 4.4992 0 0 1 6.6802 4.66zM8.3065 12.863l-2.02-1.1638a.0804.0804 0 0 1-.038-.0567V6.0742a4.4992 4.4992 0 0 1 7.3757-3.4537l-.142.0805L8.704 5.459a.7948.7948 0 0 0-.3927.6813zm1.0976-2.3654l2.602-1.4998 2.6069 1.4998v2.9994l-2.5974 1.4997-2.6067-1.4997Z"/></svg></svg></div>
  <div class="app"><svg viewBox="0 0 72 72"><rect width="72" height="72" rx="17" fill="#fff"/><circle cx="37" cy="19" r="7" fill="#7b83eb"/><circle cx="53" cy="21.500" r="5.500" fill="#5059c9"/><path fill="#5059c9" d="M46 30h14q2 0 2 2v11q0 9-8 9t-8-9z"/><path fill="#7b83eb" d="M25 30h23q2 0 2 2v14q0 13-13 13T24 46z"/><rect x="9" y="22" width="27" height="27" rx="2" fill="#4a4fb8"/><text x="22.500" y="43" text-anchor="middle" class="ms">T</text></svg></div>
  <div class="app on"><svg viewBox="0 0 72 72"><rect width="72" height="72" rx="17" fill="#438fe9"/><svg x="11" y="13" width="57" height="48" viewBox="0 0 54 48" color="#fff"><use href="#whale"/></svg></svg></div>
  <div class="app"><svg viewBox="0 0 72 72"><rect width="72" height="72" rx="17" fill="#ee7548"/><circle cx="53" cy="19.500" r="6" fill="#fff"/><path fill="#fff" d="M48 22l4 6-16 17-9-5zM35 40l-5 5-13 14-3-2 8-9 8-10z"/><path d="M54 19l2-3M52 17l-1 6M47 25 30 41" stroke="#ee7548" stroke-width="1.300"/></svg></div>
  <i class="dsep first"></i>
  <div class="app on"><svg viewBox="0 0 72 72"><rect width="72" height="72" rx="17" fill="url(#gPaper)"/><path d="M0 18v-1Q0 0 17 0h38q17 0 17 17v1z" fill="url(#gNote)"/><path d="M0 19h72" stroke="#a9a59a" stroke-width="1.600"/><path d="M1 22h70" stroke="#b5b3ad" stroke-width="1.400" stroke-dasharray="1.400 1.600"/><path d="M0 36h72M0 54h72" stroke="#d3d2cf" stroke-width="1.600"/></svg></div>
  <div class="app on"><svg viewBox="0 0 72 72" overflow="visible"><rect width="72" height="72" rx="17" fill="#f1f1f1"/><rect x="5" y="6" width="61" height="60" rx="12" fill="url(#gSky)"/><path d="M5 38h61v16q0 12-12 12H17Q5 66 5 54z" fill="#cfe0ea"/><path d="M5 38h61v7H5z" fill="#304a86"/><path d="M5 49l10-2 8 3 6 3H5zM14 64l8-4 10 6H18z" fill="#4b4239"/><path d="M37 49h30l6 22q1 4-6 4H37q-6 0-6-4z" fill="#b9bcbf" opacity=".95"/><path d="M42 52h20l4 19H38z" fill="#eceeef"/><rect x="36" y="35" width="32" height="15" rx="4" fill="#151515"/><ellipse cx="52" cy="37" rx="15.500" ry="2.600" fill="#333"/><path d="M50 54l9 2-3 3-6-1zM44 60l5 1 2 4h-6zM53 61l7 1 1 4h-7z" fill="#7a8087"/></svg></div>
  <div class="app"><svg viewBox="0 0 72 72"><rect width="72" height="72" rx="17" fill="#fff"/><path fill="#4da26d" d="M19 14q0-2 2-2h18v12H19z"/><path fill="#62c088" d="M39 12h18q2 0 2 2v10H39z"/><path fill="#449563" d="M19 24h20v12H19z"/><path fill="#4fa26c" d="M39 24h20v12H39z"/><path fill="#33774a" d="M19 36h40v11H19z"/><path fill="#2b5e3b" d="M19 47h40v10q0 2-2 2H21q-2 0-2-2z"/><rect x="6" y="22" width="27" height="27" rx="2" fill="#377c46"/><text x="19.500" y="43" text-anchor="middle" class="ms">X</text></svg></div>
  <i class="dsep second"></i>
  <div class="app"><svg viewBox="0 0 72 72" overflow="visible"><path d="M5 5q31 9 62 0l-7 65q-1 5-24 5t-24-5z" fill="url(#gBin)"/><path d="M7 4q3-8 12-6l6-5 7 3 4 4 5-7 8 6 8-1q6 2 8 6l-7 4-12 3H24z" fill="#dfe0e2"/><path d="M12 2l8-6 3 5zM25 7l6-8 6 8zM41 6l4-8 6 5zM55 3l6-3 1 6z" fill="#5c5f63"/><path d="M24 1l7 2-3 3z" fill="#4ab9e4"/><path d="M33 6l4-6 2 7z" fill="#d0603c"/><path d="M16 68q20 7 40 0l-1 3q-19 6-38 0z" fill="#a5a8aa" opacity=".6"/></svg></div>
</footer>
</body>
</html>
```

FILE: styles.css
```css
* { box-sizing: border-box; margin: 0; padding: 0; }
body {
  width: 2940px; height: 1912px; overflow: hidden;
  display: flex; flex-direction: column;
  font-family: Inter, sans-serif; color: #fff;
  background:
    linear-gradient(90deg, #6b7391, #8f919c 45%, #a3a09f) 0 0 / 100% 110px no-repeat,
    radial-gradient(circle at 2906px 1834px, #d8c890 0 3px, transparent 6px),
    radial-gradient(circle at 2931px 1891px, #c8a070 0 2px, transparent 5px),
    radial-gradient(ellipse at 2385px 1908px, #d98a1c 0 4px, transparent 14px),
    radial-gradient(ellipse at 2405px 1910px, #8a4410 0 4px, transparent 16px),
    radial-gradient(ellipse at 560px 1912px, #1c2745 0, transparent 60px),
    #08090b;
}
.defs { position: absolute; }
svg { display: block; flex: none; }
span, b, a { white-space: pre; }

.menubar {
  height: 75px; flex: none; display: flex; align-items: center; padding: 0 33px 1px 41px;
  background: linear-gradient(90deg, #737a90 0, #828896 22%, #8e909b 38%, #97979b 52%, #9a9b9e 70%, #9b9b9b);
  border-bottom: 1px solid #a9a9ad;
  font-size: 24.800px; font-weight: 500;
}
.m-apple { width: 26px; height: 35px; margin-bottom: 3px; }
.m-items { display: grid; margin-left: 42px; grid-template-columns: 114px 84px 88px 100px 128px 176px 132px 84px 137px 60px; }
.m-items b { font-weight: 700; }
.m-status { margin-left: auto; display: flex; align-items: center; color: #f4f4f4; filter: drop-shadow(0 3px 4px rgba(0,0,0,.18)); }
.m-status svg:nth-of-type(1) { margin-right: 42px; }
.m-status svg:nth-of-type(2) { margin-right: 35px; }
.m-pct { font-size: 22px; width: 58px; margin-right: 9px; letter-spacing: -.3px; }
.m-status svg:nth-of-type(3) { margin-right: 37px; }
.m-status svg:nth-of-type(4) { margin-right: 37px; }
.m-status svg:nth-of-type(5) { margin-right: 38px; }
.m-status svg:nth-of-type(6) { margin-right: 37px; }
.m-date { width: 142px; font-size: 25px; }
.m-time { width: 71px; font-size: 26px; letter-spacing: .6px; }

.window {
  height: 1707px; flex: none; display: flex; flex-direction: column; overflow: hidden;
  border-radius: 22px 22px 24px 24px; background: #111114;
  box-shadow: 0 0 0 1px #000; position: relative;
}
.tabs { height: 81px; flex: none; display: flex; align-items: center; padding: 1px 26px 1px 42px; border-top: 3px solid #5a5a5e; background: #111114; }
.light { width: 24px; height: 24px; border-radius: 50%; margin-right: 16px; }
.red { background: #ec6a5e; } .yellow { background: #f4bf4f; } .green { background: #61c554; }
.tab { width: 470px; height: 66px; margin-left: 12px; border-radius: 16px; background: #252429; display: flex; align-items: center; padding: 0 23px 0 25px; font-size: 23.500px; font-weight: 500; }
.fav { width: 30px; height: 30px; margin-right: 17px; }
.close { width: 18px; height: 18px; margin-left: auto; }
.plus { width: 22px; height: 22px; margin-left: 31px; margin-bottom: 2px; }
.tabmenu { width: 22px; height: 13px; margin-left: auto; }

.toolbar { height: 80px; flex: none; display: flex; align-items: center; background: #252429; padding: 0 18px 0 36px; }
.back, .fwd { width: 16px; height: 30px; }
.fwd { margin-left: 44px; }
.reload { width: 32px; height: 32px; margin-left: 36px; }
.bm { width: 24px; height: 32px; margin-left: 286px; }
.omnibox { width: 1648px; height: 64px; margin-left: 34px; background: #111114; border-radius: 16px; display: flex; align-items: center; padding: 0 42px 0 19px; }
.info { width: 26px; height: 26px; }
.url { margin-left: 31px; font-size: 27.300px; color: #c3c3c8; letter-spacing: .22px; }
.url em { font-style: normal; color: #f0f0f3; }
.share { width: 26px; height: 32px; margin-left: auto; margin-bottom: 2px; }
.osep { width: 2px; height: 32px; background: #a0a0a5; margin-left: 20px; }
.obrave { width: 32px; height: 37px; margin-left: 22px; }
.bat { width: 36px; height: 31px; margin-left: 34px; }
.exts { display: flex; gap: 28px; margin-left: 184px; }
.exts svg { width: 32px; height: 32px; }
.vpn { width: 110px; height: 56px; margin-left: 16px; border: 2px solid #323137; border-radius: 16px; display: flex; align-items: center; padding-left: 14px; gap: 8px; font-size: 23.500px; color: #ebebef; }
.vpn svg { width: 20px; height: 20px; }
.update { width: 158px; height: 56px; margin-left: 10px; border: 3px solid #f3b1ae; border-radius: 16px; background: #393135; color: #f3b1ae; display: flex; align-items: center; padding: 0 10px 0 15px; justify-content: space-between; font-size: 25.500px; }
.update svg { width: 30px; height: 26px; }

.bookmarks {
  height: 70px; flex: none; padding: 0 0 9px 24px; background: #252429; border-bottom: 2px solid #55545b;
  display: grid; align-items: center; font-size: 23.500px; font-weight: 500;
  grid-template-columns: 132px 140px 158px 154px 143px 199px 202px 244px 158px 156px 180px 192px 172px 366px 55px 30px 210px;
}
.bookmarks a { display: flex; align-items: center; gap: 12px; }
.bookmarks a svg { width: 32px; height: 32px; }
.grey svg { color: #8a8a8c; }
.cal5 { font: 700 18px Inter, sans-serif; fill: #3367d6; }
.more { width: 22px; height: 18px; }
.bsep { width: 4px; height: 32px; background: #111114; }

.page { flex: 1; background: #fafafa; color: #3b4151; font-family: "Liberation Sans", sans-serif; display: flex; flex-direction: column; border-left: 1px solid #f4f4f4; }
.topbar { height: 120px; background: #1b1b1b; margin-left: -1px; display: flex; align-items: flex-start; padding: 20px 50px 0; color: #fff; }
.logo { width: 70px; height: 70px; }
.brand { width: 536px; margin-left: 13px; font-family: "Open Sans", sans-serif; padding-top: 4px; }
.word { font-size: 43px; line-height: 56px; letter-spacing: -1.100px; }
.word sub { font-size: 6px; letter-spacing: 0; vertical-align: 0; margin-left: 2px; line-height: 0; }
.by { font-size: 12.500px; line-height: 20px; letter-spacing: .1px; margin-top: 2px; }
.by b { font-size: 16px; font-weight: 600; letter-spacing: 2.200px; margin-left: 2px; line-height: 20px; }
.field { width: 1980px; height: 77px; margin: 2px 0 0 1px; border: 4px solid #709f4c; border-right: 0; border-radius: 8px 0 0 8px; background: #fff; color: #000; font-size: 32px; line-height: 71px; padding-left: 20px; }
.explore { width: 241px; height: 77px; margin-top: 2px; background: #709f4c; border-radius: 0 8px 8px 0; font-size: 32px; font-weight: 700; line-height: 76px; text-align: center; padding-left: 4px; }

.infobox { height: 320px; padding: 101px 49px 0; }
.titlerow { display: flex; align-items: flex-start; height: 77px; }
h1 { font-size: 72px; line-height: 72px; margin-top: 4px; white-space: nowrap; }
.pill { height: 40px; border-radius: 20px; color: #fff; font-size: 28px; font-weight: 700; line-height: 41px; text-align: center; margin-left: 10px; }
.grey-pill { width: 63px; background: #7d8492; }
.green-pill { width: 123px; background: #96c03d; }
.doclink { display: block; font-size: 24px; line-height: 28px; margin-top: 13px; color: #4f8fe6; }

.schemes { height: 217px; background: #fff; margin-left: -1px; padding: 68px 50px 0; box-shadow: 0 2px 4px rgba(0,0,0,.15); }
label { display: block; font-size: 24px; font-weight: 700; line-height: 28px; }
.select { width: 710px; height: 61px; margin-top: 1px; border: 4px solid #41444e; border-radius: 8px; background: #f7f7f7; box-shadow: 0 2px 4px rgba(0,0,0,.3); display: flex; align-items: center; justify-content: space-between; padding: 0 29px 0 20px; font-size: 28px; font-weight: 700; }
.select svg { width: 22px; height: 14px; }

.body { padding: 40px 50px 0 49px; }
.chev { width: 36px; height: 22px; margin-left: auto; }
.tag { height: 101px; border-bottom: 2px solid #c0c2c7; display: flex; align-items: center; padding: 0 54px 0 20px; }
.tag .chev { margin-bottom: 6px; }
h3 { font-size: 48px; }
.op { height: 80px; margin-top: 10px; border: 2px solid #70c995; border-radius: 8px; background: #ebf5ef; box-shadow: 0 0 6px rgba(0,0,0,.19); display: flex; align-items: center; padding: 0 24px 0 10px; }
.method { width: 160px; height: 56px; border-radius: 6px; background: #70c995; color: #fff; font-size: 28px; font-weight: 700; line-height: 57px; text-align: center; text-shadow: 0 2px 0 rgba(0,0,0,.1); }
.path { margin-left: 20px; font: 700 32px/36px "DejaVu Sans Mono", monospace; }
.desc { margin-left: 20px; font-size: 26px; padding-top: 1px; }
.down { transform: rotate(180deg); margin-bottom: 6px; }
.models { height: 418px; margin-top: 90px; border: 2px solid #c0c2c7; border-radius: 8px; }
.mhead { height: 92px; border-bottom: 2px solid #c0c2c7; display: flex; align-items: center; padding: 0 42px 8px 20px; color: #606060; }
h4 { font-size: 32px; }
.model { width: 2756px; height: 272px; margin: 10px 0 0 40px; border-radius: 8px; background: #ececec; padding: 54px 40px 0; font: 700 24px/28px "DejaVu Sans Mono", monospace; }
.mname { display: flex; height: 30px; align-items: center; }
.mname b { font: 700 32px/30px "Liberation Sans", sans-serif; color: #505050; width: 276px; }
.mname svg { width: 22px; height: 14px; margin-top: 6px; }
.mname span { margin: 4px 0 0 15px; font-weight: 700; }
.props { display: grid; grid-template-columns: 300px auto; padding-left: 48px; margin-top: 3px; }
.props i { color: #f03020; font-style: normal; }
.type { color: #5555aa; }
.ex { color: #6b6b6b; font-style: italic; }
.end { margin-top: 32px; }

.dock {
  position: relative; width: 2783px; height: 118px; flex: none; margin: 2px 0 0 79px; display: flex;
  border: 2px solid #3f4042; border-radius: 40px; padding: 16px 0 0 3px;
  background: linear-gradient(90deg, #1c1c1c 0, #1a1b1b 18%, #1d1f26 24%, #1b1d20 40%, #1b1d20 68%, #1c1c1a 78%, #1c1c1a 90%, #1a1b1d);
  box-shadow: 0 0 90px rgba(0,0,0,.25);
}
.app { width: 95.900px; flex: none; display: flex; justify-content: center; position: relative; }
.app > svg { width: 71px; height: 72px; }
.on::after { content: ""; position: absolute; left: 44px; top: 88px; width: 8px; height: 8px; border-radius: 50%; background: #98989c; }
.badge { position: absolute; left: 62px; top: -9px; min-width: 34px; height: 34px; border-radius: 17px; background: #e04d3f; text-align: center; font-size: 22px; line-height: 34px; }
.wide { left: 54px; width: 40px; font-size: 20px; letter-spacing: -.8px; }
.dsep { width: 2px; height: 86px; background: #5a5a5a; margin-top: -2px; flex: none; }
.first { margin-left: 23px; margin-right: 20px; }
.second { margin-left: 20px; margin-right: 20px; }
.apr { font: 700 15px Inter, sans-serif; fill: #fff; }
.seven { font: 400 44px Inter, sans-serif; fill: #2b2b2b; }
.jb { font: 700 25px "DejaVu Sans Mono", monospace; fill: #fff; letter-spacing: -1px; }
.tv { font: 500 32px Inter, sans-serif; fill: #fff; }
.ms { font: 700 20px "Open Sans", sans-serif; fill: #fff; }
```
